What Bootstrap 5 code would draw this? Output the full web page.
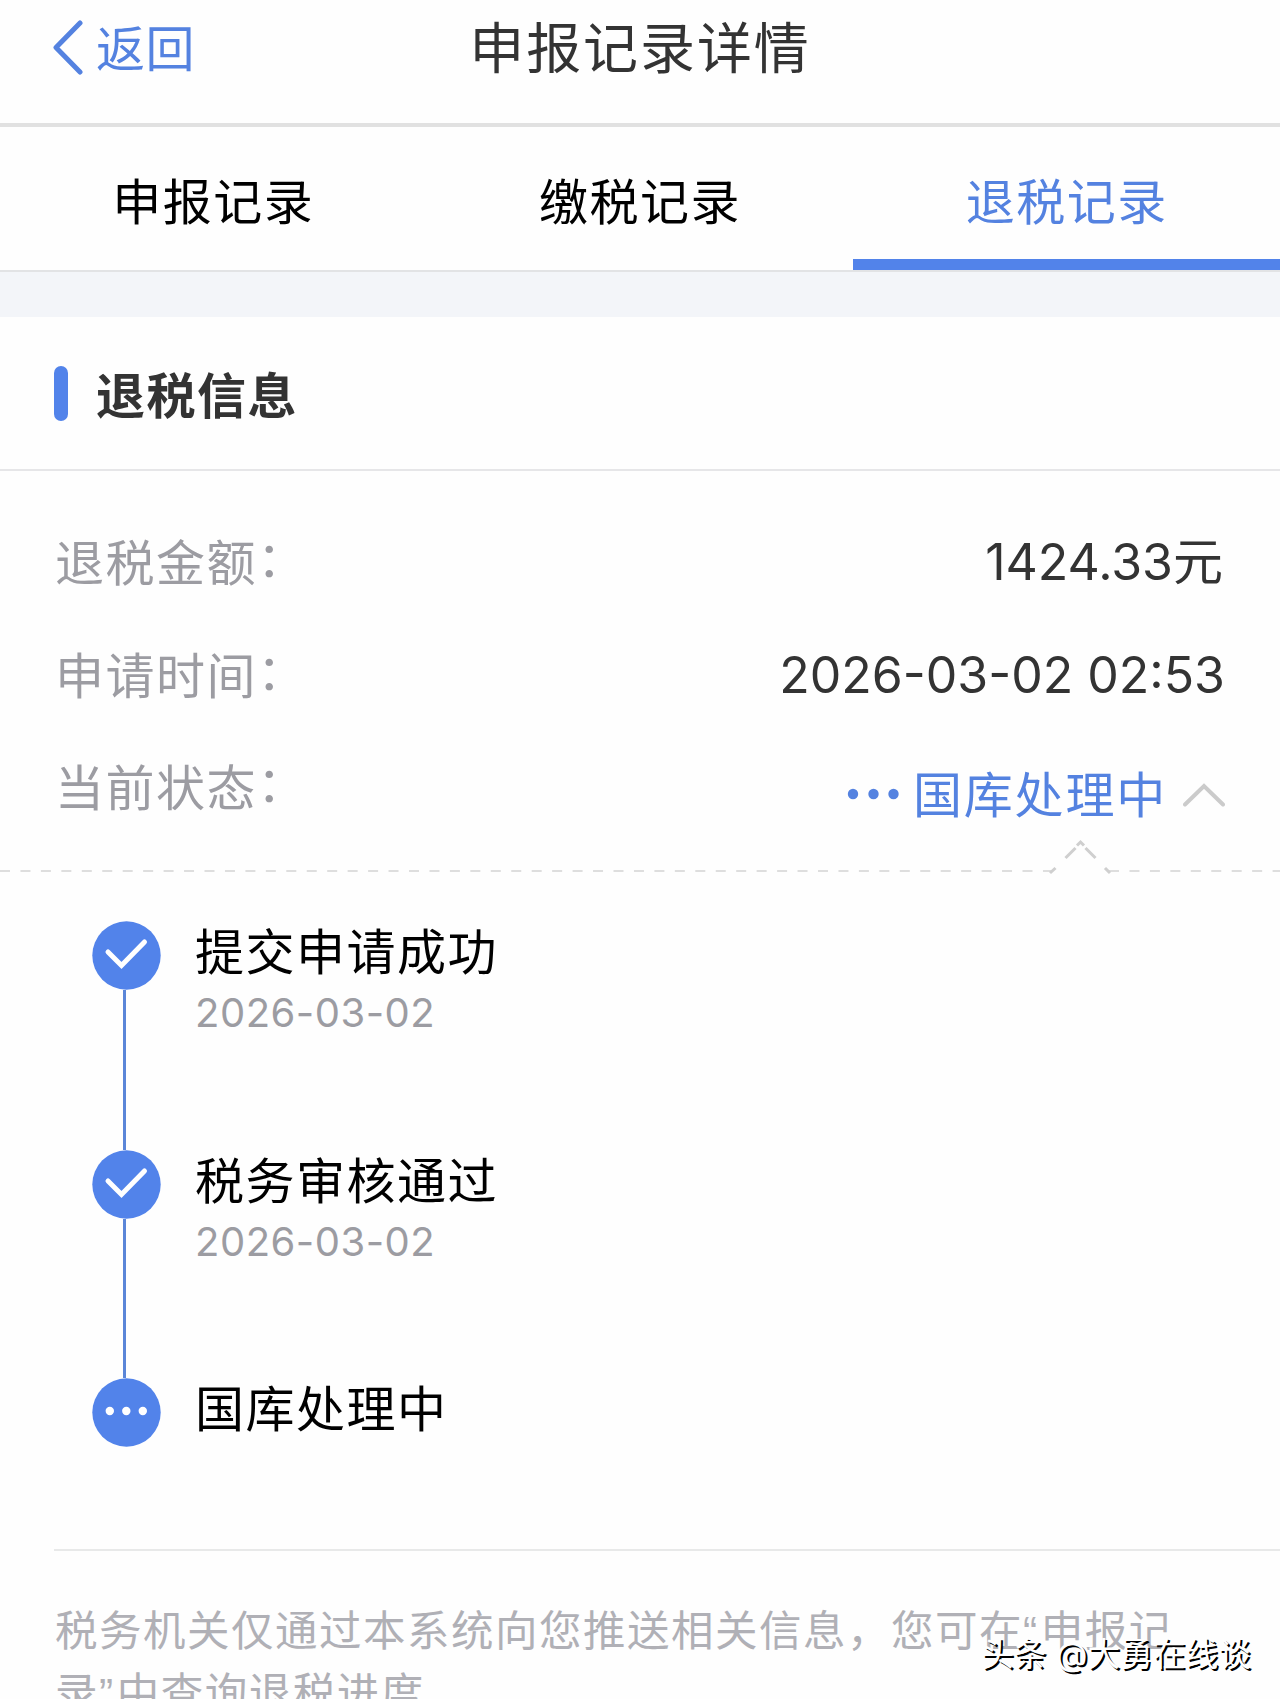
<!DOCTYPE html>
<html lang="zh-CN">
<head>
<meta charset="utf-8">
<meta name="viewport" content="width=device-width, initial-scale=1">
<title>申报记录详情</title>
<link href="https://cdn.jsdelivr.net/npm/bootstrap@5.3.0/dist/css/bootstrap.min.css" rel="stylesheet">
<style>
  :root { --tax-blue: #5283ea; --tax-ink: #5482e0; --tax-text: #333; --tax-gray: #9c9ca2; }
  html, body { height: 1699px; overflow: hidden; }
  body { font-family: Inter, "Noto Sans CJK SC", sans-serif; background: #fefefe; color: var(--tax-text); font-size: 49px; letter-spacing: 1.5px; }
  .text-tax { color: var(--tax-ink); }
  .top-bar { height: 127px; border-bottom: 4px solid #e1e1e1; padding: 0 52px 29px; }
  .top-side { width: 300px; gap: 13px; letter-spacing: .4px; }
  .top-side span { padding-top: 6px; }
  .top-title { font-size: 55px; letter-spacing: 1.9px; line-height: 94px; padding-top: 2px; }
  .tax-tabs { height: 145px; border-bottom: 2px solid #e2e3e5; }
  .tax-tabs .nav-link { height: 143px; padding: 5px 0 0; line-height: 141px; color: #000; border-bottom: 0 solid var(--tax-blue); border-radius: 0; }
  .tax-tabs .nav-link.active { color: var(--tax-ink); border-bottom: 11px solid var(--tax-blue); }
  .tax-tabs .nav-link span { display: block; height: 127px; }
  .band { height: 45px; background: #f3f5f9; }
  .sect-head { height: 154px; padding-left: 54px; border-bottom: 2px solid #e6e6e8; }
  .sect-bar { width: 14px; height: 55px; border-radius: 7px; background: var(--tax-blue); margin-right: 28px; }
  .sect-name { line-height: 60px; padding-top: 7px; }
  .info-list { padding: 35px 55px 0; height: 367px; }
  .info-row { height: 112.5px; line-height: 112.5px; }
  .info-label { color: var(--tax-gray); padding-top: 2px; }
  .label-colon { position: relative; left: 0; top: -4px; }
  .info-value { font-size: 50px; letter-spacing: 0; }
  .amount { padding-right: 2px; }
  .state { padding-top: 17px; }
  .state-name { padding-left: 14px; letter-spacing: 1.8px; }
  .state-dots { margin-top: -3px; }
  .steps { padding: 45px 0 0 92px; height: 673px; }
  .step-item { height: 228.6px; }
  .step-rail { width: 69px; margin-right: 34px; }
  .step-rail svg { flex: none; }
  .rail-line { width: 3.4px; margin-right: 4px; background: #5b86d8; }
  .step-name { color: #000; line-height: 60px; padding-top: 2px; }
  .step-date { color: var(--tax-gray); font-size: 40px; line-height: 50px; letter-spacing: .5px; padding-top: 5px; }
  .foot-note { margin-left: 54px; border-top: 2px solid #e8e9e9; padding: 49px 80px 0 1px; font-size: 42.5px; letter-spacing: 1.5px; line-height: 61px; color: #b0b0b6; }
  .curly { font-family: "Liberation Sans", sans-serif; margin-right: 2px; }
  .stamp { right: 29px; bottom: 19px; font-size: 32.5px; line-height: 50px; letter-spacing: .2px; color: #fff; text-shadow: 2px 2px 0 #000; }
</style>
</head>
<body>
<header class="top-bar d-flex align-items-center justify-content-between">
  <a class="top-side text-tax d-flex align-items-center text-decoration-none" href="#">
    <svg width="31" height="56" viewBox="0 0 31 56" fill="none" stroke="currentColor" stroke-width="5" stroke-linecap="round" stroke-linejoin="round"><path d="M28 4 4 28.500 28 53"/></svg>
    <span>返回</span>
  </a>
  <h1 class="top-title fw-normal m-0 text-nowrap">申报记录详情</h1>
  <div class="top-side"></div>
</header>
<nav class="tax-tabs nav nav-justified flex-nowrap">
  <a class="nav-link w-100" href="#"><span>申报记录</span></a>
  <a class="nav-link w-100" href="#"><span>缴税记录</span></a>
  <a class="nav-link w-100 active" href="#"><span>退税记录</span></a>
</nav>
<div class="band"></div>
<main>
  <div class="sect-head d-flex align-items-center">
    <div class="sect-bar"></div>
    <div class="sect-name fw-bold">退税信息</div>
  </div>
  <div class="info-list">
    <div class="info-row d-flex justify-content-between"><span class="info-label">退税金额<span class="label-colon">：</span></span><span class="info-value amount">1424.33元</span></div>
    <div class="info-row d-flex justify-content-between"><span class="info-label">申请时间<span class="label-colon">：</span></span><span class="info-value">2026-03-02 02:53</span></div>
    <div class="info-row d-flex justify-content-between">
      <span class="info-label">当前状态<span class="label-colon">：</span></span>
      <span class="state d-flex align-items-center text-tax">
        <svg class="state-dots" width="52" height="12" viewBox="0 0 52 12" fill="currentColor"><circle cx="6" cy="6" r="5.200"/><circle cx="26.500" cy="6" r="5.200"/><circle cx="46.500" cy="6" r="5.200"/></svg>
        <span class="state-name">国库处理中</span>
        <svg class="ms-3" width="42" height="26" viewBox="0 0 42 26" fill="none" stroke="#cbcbcb" stroke-width="4" stroke-linecap="round"><path d="M2 21.500 21 3 40 21.500"/></svg>
      </span>
    </div>
  </div>
  <svg class="d-block" width="1280" height="38" viewBox="0 0 1280 38" fill="none" stroke="#dedede" stroke-width="2">
    <path d="M0 33H1052M1109 33H1280" stroke-dasharray="10 10.450"/>
    <path d="M1050 35 1055.500 30M1065.500 20 1075.500 10M1077 7.500 1080.500 4 1084 7.500M1085.500 10 1095.500 20M1105 30 1110 35" stroke="#cfcfcf" stroke-width="3"/>
  </svg>
  <div class="steps">
    <div class="step-item d-flex">
      <div class="step-rail d-flex flex-column align-items-center">
        <svg width="69" height="69" viewBox="0 0 69 69"><circle cx="34.500" cy="34.500" r="34.200" fill="#5283ea"/><path d="M16 31 29.500 44.500 52.500 21" fill="none" stroke="#fff" stroke-width="5" stroke-linecap="round"/></svg>
        <div class="rail-line flex-grow-1"></div>
      </div>
      <div><div class="step-name">提交申请成功</div><div class="step-date">2026-03-02</div></div>
    </div>
    <div class="step-item d-flex">
      <div class="step-rail d-flex flex-column align-items-center">
        <svg width="69" height="69" viewBox="0 0 69 69"><circle cx="34.500" cy="34.500" r="34.200" fill="#5283ea"/><path d="M16 31 29.500 44.500 52.500 21" fill="none" stroke="#fff" stroke-width="5" stroke-linecap="round"/></svg>
        <div class="rail-line flex-grow-1"></div>
      </div>
      <div><div class="step-name">税务审核通过</div><div class="step-date">2026-03-02</div></div>
    </div>
    <div class="d-flex">
      <div class="step-rail">
        <svg class="d-block" width="69" height="69" viewBox="0 0 69 69"><circle cx="34.500" cy="34.500" r="34.200" fill="#5283ea"/><g fill="#fff"><circle cx="17.800" cy="33" r="4.200"/><circle cx="34.300" cy="33" r="4.200"/><circle cx="50.800" cy="33" r="4.200"/></g></svg>
      </div>
      <div class="step-name">国库处理中</div>
    </div>
  </div>
  <p class="foot-note mb-0">税务机关仅通过本系统向您推送相关信息，您可在<span class="curly">“</span>申报记录<span class="curly">”</span>中查询退税进度</p>
</main>
<div class="stamp position-absolute text-nowrap">头条 @大勇在线谈</div>
<script src="https://cdn.jsdelivr.net/npm/bootstrap@5.3.0/dist/js/bootstrap.bundle.min.js"></script>
</body>
</html>
